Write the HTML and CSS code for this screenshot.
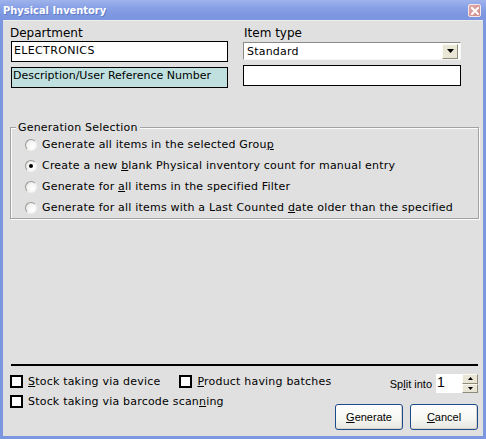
FILE: index.html
```html
<!DOCTYPE html>
<html>
<head>
<meta charset="utf-8">
<link rel="stylesheet" href="styles.css">
</head>
<body>
<div class="window">
  <div class="titlebar">
    <span class="title">Physical Inventory</span>
    <span class="close"><svg width="8" height="8" viewBox="0 0 8 8"><path d="M1 1 L7 7 M7 1 L1 7" stroke="#fff" stroke-width="2" stroke-linecap="square"/></svg></span>
  </div>
  <div class="client">
    <div class="top">
      <div class="col">
        <div class="label">Department</div>
        <div class="field dept">ELECTRONICS</div>
        <div class="field desc">Description/User Reference Number</div>
      </div>
      <div class="col">
        <div class="label right-label">Item type</div>
        <div class="select">
          <span class="select-text">Standard</span>
          <span class="drop"><svg width="7" height="4" viewBox="0 0 7 4"><path d="M0 0 H7 L3.5 4 Z" fill="#000"/></svg></span>
        </div>
        <div class="field right-field"></div>
      </div>
    </div>

    <div class="group">
      <div class="group-title">Generation Selection</div>
      <div class="radio-row"><span class="radio"></span><span>Generate all items in the selected Grou<u>p</u></span></div>
      <div class="radio-row"><span class="radio checked"></span><span>Create a new <u>b</u>lank Physical inventory count for manual entry</span></div>
      <div class="radio-row"><span class="radio"></span><span>Generate for <u>a</u>ll items in the specified Filter</span></div>
      <div class="radio-row"><span class="radio"></span><span>Generate for all items with a Last Counted <u>d</u>ate older than the specified</span></div>
    </div>

    <div class="bottom">
      <div class="sep"></div>
      <div class="bottom-main">
        <div class="checks">
          <div class="check-row">
            <span class="check"><span class="box"></span><span><u>S</u>tock taking via device</span></span>
            <span class="check second"><span class="box"></span><span><u>P</u>roduct having batches</span></span>
          </div>
          <div class="check-row">
            <span class="check"><span class="box"></span><span>Stock taking via barcode scan<u>n</u>ing</span></span>
          </div>
        </div>
        <div class="actions">
          <div class="split">
            <span class="split-label">Sp<u>l</u>it into</span>
            <span class="split-input">1</span>
            <span class="spin">
              <span class="spin-btn"><svg width="5" height="3" viewBox="0 0 5 3"><path d="M2.5 0 L5 3 H0 Z" fill="#000"/></svg></span>
              <span class="spin-btn"><svg width="5" height="3" viewBox="0 0 5 3"><path d="M0 0 H5 L2.5 3 Z" fill="#000"/></svg></span>
            </span>
          </div>
          <div class="buttons">
            <span class="btn"><u>G</u>enerate</span>
            <span class="btn"><u>C</u>ancel</span>
          </div>
        </div>
      </div>
    </div>
  </div>
</div>
</body>
</html>
```

FILE: styles.css
```css
html, body {
  margin: 0;
  padding: 0;
}
body {
  font-family: "DejaVu Sans", sans-serif;
  font-size: 11px;
  color: #000;
}
.window {
  width: 486px;
  height: 439px;
  box-sizing: border-box;
  background: #7b97e0;
  display: flex;
  flex-direction: column;
  overflow: hidden;
}
.titlebar {
  height: 20px;
  flex: none;
  display: flex;
  align-items: center;
  justify-content: space-between;
  padding: 0 5px 0 3px;
  background: linear-gradient(#9fb4ec, #8aa2e7 35%, #7d98e1 70%, #7b96df);
}
.title {
  font-family: "DejaVu Sans Condensed", "DejaVu Sans", sans-serif;
  font-weight: bold;
  font-size: 11px;
  color: #fff;
  text-shadow: 1px 1px 0 rgba(40, 60, 140, 0.35);
  line-height: 20px;
  margin-top: 1px;
}
.close {
  width: 13px;
  height: 13px;
  box-sizing: border-box;
  border: 1px solid #f3e6ea;
  border-radius: 2px;
  background: linear-gradient(135deg, #e3aaa9, #cf8a86);
  display: flex;
  align-items: center;
  justify-content: center;
  margin-top: 1px;
}
.client {
  flex: 1;
  margin: 0 3px 3px 3px;
  background: #e0e0e0;
  display: flex;
  flex-direction: column;
  border-top: 1px solid #ededed;
}
.top {
  display: grid;
  grid-template-columns: 217px 218px;
  column-gap: 15px;
  padding: 5px 0 0 8px;
}
.col {
  display: flex;
  flex-direction: column;
}
.label {
  font-size: 12px;
  line-height: 15px;
  height: 15px;
  margin-left: -1px;
}
.right-label {
  margin-left: 1px;
}
.field {
  height: 21px;
  box-sizing: border-box;
  border: 1px solid #000;
  background: #fff;
  line-height: 17px;
  padding-left: 2px;
  white-space: nowrap;
}
.dept {
  letter-spacing: 0.35px;
}
.desc {
  margin-top: 5px;
  background: #bfe0df;
  line-height: 16px;
  padding-left: 1px;
}
.right-field {
  margin-top: 5px;
}
.select {
  margin-top: 1px;
  height: 18px;
  box-sizing: border-box;
  border-style: solid;
  border-width: 1px;
  border-color: #8b8b86 #f6f6f3 #f6f6f3 #8b8b86;
  background: #fff;
  display: flex;
  align-items: center;
  justify-content: space-between;
  padding: 0 2px 0 3px;
}
.select-text {
  line-height: 16px;
  padding-top: 1px;
  letter-spacing: 0.2px;
}
.drop {
  width: 16px;
  height: 15px;
  box-sizing: border-box;
  border-style: solid;
  border-width: 1px;
  border-color: #fbfaf5 #8f8c7c #8f8c7c #fbfaf5;
  background: #e9e6d6;
  display: flex;
  align-items: center;
  justify-content: center;
}
.group {
  margin: 39px 4px 0 7px;
  border: 1px solid #a2a2a2;
  box-shadow: inset 1px 1px 0 #fbfbfb, 1px 1px 0 #fbfbfb;
  padding-left: 14px;
  height: 90px;
  letter-spacing: 0.2px;
}
.group-title {
  width: fit-content;
  margin: -7px 0 0 -9px;
  padding: 0 2px;
  background: #e0e0e0;
  line-height: 13px;
  height: 13px;
}
.radio-row {
  display: flex;
  align-items: center;
  height: 21px;
  white-space: nowrap;
}
.radio {
  width: 12px;
  height: 12px;
  box-sizing: border-box;
  border-radius: 50%;
  border: 1px solid;
  border-color: #9a9a9a #f2f2f2 #f2f2f2 #9a9a9a;
  background: radial-gradient(circle at 65% 65%, #ffffff 0, #f6f6f4 50%, #dadad6 100%);
  margin-right: 5px;
  flex: none;
  display: flex;
  align-items: center;
  justify-content: center;
}
.radio.checked::after {
  content: "";
  width: 4px;
  height: 4px;
  border-radius: 50%;
  background: #000;
}
.bottom {
  margin-top: auto;
  padding: 0 5px 6px 7px;
}
.sep {
  height: 2px;
  background: #000;
  margin-left: 1px;
}
.bottom-main {
  display: flex;
  justify-content: space-between;
  align-items: flex-start;
}
.checks {
  margin-top: 5px;
  letter-spacing: 0.2px;
}
.check-row {
  display: flex;
  align-items: center;
  height: 20px;
  white-space: nowrap;
}
.check {
  display: flex;
  align-items: center;
}
.check.second {
  margin-left: 19px;
}
.box {
  width: 13px;
  height: 13px;
  box-sizing: border-box;
  border: 2px solid #000;
  background: #fff;
  margin-right: 5px;
  flex: none;
}
.actions {
  display: flex;
  flex-direction: column;
  align-items: flex-end;
  margin-top: 8px;
}
.split {
  display: flex;
  align-items: center;
  height: 19px;
}
.split-label {
  font-family: "Liberation Sans", Arial, sans-serif;
  font-size: 11px;
  margin-right: 4px;
}
.split-input {
  width: 26px;
  height: 19px;
  box-sizing: border-box;
  background: #fff;
  font-family: "Liberation Sans", Arial, sans-serif;
  font-size: 14px;
  line-height: 17px;
  padding-left: 1px;
}
.spin {
  width: 16px;
  height: 19px;
  display: flex;
  flex-direction: column;
}
.spin-btn {
  flex: 1;
  box-sizing: border-box;
  border-style: solid;
  border-width: 1px;
  border-color: #fbfaf5 #8f8c7c #8f8c7c #fbfaf5;
  background: #e9e6d6;
  display: flex;
  align-items: center;
  justify-content: center;
}
.buttons {
  display: flex;
  gap: 7px;
  margin-top: 11px;
}
.btn {
  width: 68px;
  height: 26px;
  box-sizing: border-box;
  border: 1px solid #1c4a8a;
  border-radius: 3px;
  background: linear-gradient(#ffffff, #f6f6f2 60%, #e6e5de);
  box-shadow: inset -1px -1px 0 #d8d6cc;
  font-family: "Liberation Sans", Arial, sans-serif;
  font-size: 11px;
  display: flex;
  align-items: center;
  justify-content: center;
}
```
